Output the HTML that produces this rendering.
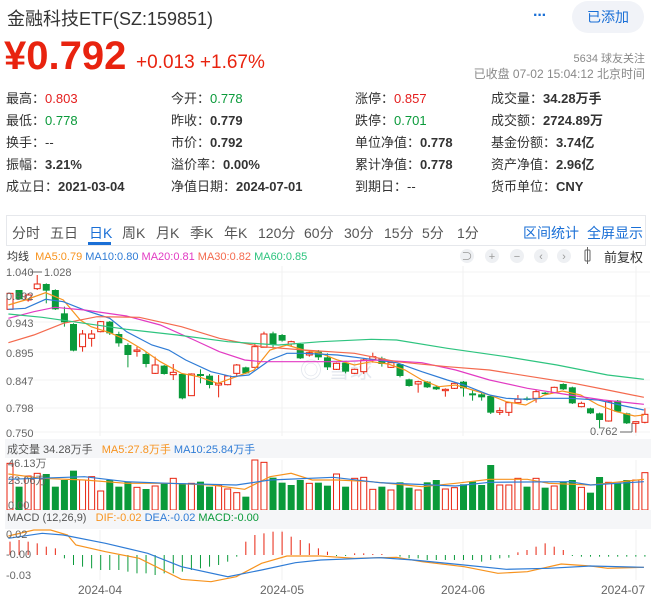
<!DOCTYPE html>
<html><head><meta charset="utf-8"><style>
*{margin:0;padding:0;box-sizing:border-box}
body{width:657px;height:598px;overflow:hidden;background:#fff;font-family:"Liberation Sans","Noto Sans CJK SC",sans-serif;color:#333;position:relative}
.a{position:absolute;white-space:nowrap}
.r{color:#e41e1e}.g{color:#0a9a3a}
.grid span{position:absolute;font-size:13px;white-space:nowrap}
.grid b{font-weight:bold}
.tab{position:absolute;top:223px;font-size:14px;color:#555}
</style></head><body>
<div class="a" style="left:7px;top:5px;font-size:18px;color:#333">金融科技ETF(SZ:159851)</div>
<div class="a" style="left:533px;top:7px;font-size:16px;font-weight:bold;color:#1a6fd6;letter-spacing:-1px">···</div>
<div class="a" style="left:572px;top:1px;width:72px;height:32px;border-radius:16px;background:#f1f3f8;color:#1a6fd6;font-size:14px;line-height:32px;text-align:center">已添加</div>
<div class="a r" style="left:4px;top:34px;font-size:40px;font-weight:bold;color:#e8230f">¥0.792</div>
<div class="a r" style="left:136px;top:52px;font-size:19px;color:#e8230f">+0.013 +1.67%</div>
<div class="a" style="right:12px;top:50px;font-size:11px;color:#888">5634 球友关注</div>
<div class="a" style="right:12px;top:65px;font-size:12px;color:#888">已收盘 07-02 15:04:12 北京时间</div>
<div class="grid">
<span style="left:6px;top:88px">最高：<b class="r" style="font-weight:normal">0.803</b></span>
<span style="left:6px;top:110px">最低：<b class="g" style="font-weight:normal">0.778</b></span>
<span style="left:6px;top:132px">换手：--</span>
<span style="left:6px;top:154px">振幅：<b>3.21%</b></span>
<span style="left:6px;top:176px">成立日：<b>2021-03-04</b></span>
<span style="left:171px;top:88px">今开：<b class="g" style="font-weight:normal">0.778</b></span>
<span style="left:171px;top:110px">昨收：<b>0.779</b></span>
<span style="left:171px;top:132px">市价：<b>0.792</b></span>
<span style="left:171px;top:154px">溢价率：<b>0.00%</b></span>
<span style="left:171px;top:176px">净值日期：<b>2024-07-01</b></span>
<span style="left:355px;top:88px">涨停：<b class="r" style="font-weight:normal">0.857</b></span>
<span style="left:355px;top:110px">跌停：<b class="g" style="font-weight:normal">0.701</b></span>
<span style="left:355px;top:132px">单位净值：<b>0.778</b></span>
<span style="left:355px;top:154px">累计净值：<b>0.778</b></span>
<span style="left:355px;top:176px">到期日：--</span>
<span style="left:491px;top:88px">成交量：<b>34.28万手</b></span>
<span style="left:491px;top:110px">成交额：<b>2724.89万</b></span>
<span style="left:491px;top:132px">基金份额：<b>3.74亿</b></span>
<span style="left:491px;top:154px">资产净值：<b>2.96亿</b></span>
<span style="left:491px;top:176px">货币单位：<b>CNY</b></span>
</div>
<div class="a" style="left:6px;top:215px;width:640px;height:31px;border:1px solid #e6e8ec"></div>
<div class="tab" style="left:12px">分时</div><div class="tab" style="left:50px">五日</div>
<div class="tab" style="left:89px;color:#1a6fd6">日K</div>
<div class="a" style="left:88px;top:242px;width:23px;height:3px;background:#1a6fd6"></div>
<div class="tab" style="left:122px">周K</div><div class="tab" style="left:156px">月K</div><div class="tab" style="left:190px">季K</div><div class="tab" style="left:224px">年K</div>
<div class="tab" style="left:258px">120分</div><div class="tab" style="left:304px">60分</div><div class="tab" style="left:344px">30分</div><div class="tab" style="left:384px">15分</div><div class="tab" style="left:422px">5分</div><div class="tab" style="left:457px">1分</div>
<div class="tab" style="left:523px;color:#1a6fd6">区间统计</div><div class="tab" style="left:587px;color:#1a6fd6">全屏显示</div>
<div class="a" style="left:7px;top:248px;font-size:11px">均线 <span style="color:#f7931e">&nbsp;MA5:0.79</span> <span style="color:#2f7cd6">MA10:0.80</span> <span style="color:#e23ac3">MA20:0.81</span> <span style="color:#f46a4e">MA30:0.82</span> <span style="color:#2ec47f">MA60:0.85</span></div>
<svg class="a" style="left:0;top:0" width="657" height="598" id="s"></svg>
<div class="a" style="left:604px;top:247px;font-size:13px">前复权</div>
<div class="a" style="left:5px;top:439px;width:646px;height:19px;background:#f5f6f8"></div>
<div class="a" style="left:5px;top:510px;width:646px;height:19px;background:#f5f6f8"></div>
<div class="a" style="left:7px;top:441px;font-size:11px;color:#555">成交量 34.28万手 &nbsp;&nbsp;<span style="color:#f7931e">MA5:27.8万手</span> <span style="color:#2f7cd6">MA10:25.84万手</span></div>
<div class="a" style="left:7px;top:512px;font-size:11px;color:#555">MACD (12,26,9) &nbsp;&nbsp;<span style="color:#f7931e">DIF:-0.02</span> <span style="color:#2f7cd6">DEA:-0.02</span> <span style="color:#0a9a3a">MACD:-0.00</span></div>
<script>
var s=document.getElementById('s'),h='';
function X(zx){return zx/2.37}
function L(x1,y1,x2,y2,c,w){h+='<line x1="'+x1+'" y1="'+y1+'" x2="'+x2+'" y2="'+y2+'" stroke="'+c+'" stroke-width="'+(w||1)+'"/>'}
function T(x,y,t,c,fs,a){h+='<text x="'+x+'" y="'+y+'" fill="'+(c||'#666')+'" font-size="'+(fs||11)+'" font-family="Liberation Sans,Noto Sans CJK SC,sans-serif"'+(a?' text-anchor="'+a+'"':'')+'>'+t+'</text>'}
function P(pts,c,base){var d=pts.map(function(p,i){return (i?'L':'M')+X(p[0]).toFixed(1)+' '+(base+p[1]/3).toFixed(1)}).join(' ');h+='<path d="'+d+'" fill="none" stroke="'+c+'" stroke-width="1.2"/>'}
[100,282,463,636].forEach(function(x){L(x,266,x,436,'#f0f0f0');L(x,460,x,510,'#f0f0f0');L(x,530,x,580,'#f0f0f0')});
[272,296,322,352,380,408,432].forEach(function(y){L(5,y,650,y,'#f3f3f3')});
T(300,378,'◎ 雪球','#e3e7ee',22);
var C=[['r',250,298,250,298],['g',240,268,240,270],['r',255,270,250,275],['r',222,236,195,240],['g',222,242,220,280],['g',240,298,238,300],['g',310,337,290,350],['g',342,422,340,424],['r',372,410,360,425],['r',372,385,360,410],['r',335,365,333,367],['g',335,370,333,375],['g',372,400,365,410],['g',405,435,400,472],['r',420,424,410,440],['g',432,462,425,472],['r',465,490,440,492],['g',467,492,465,494],['r',487,494,462,510],['g',492,565,490,568],['r',492,557,490,558],['g',492,498,478,520],['g',497,525,492,535],['r',520,525,495,562],['r',498,524,496,526],['r',465,490,462,500],['g',472,490,470,492],['r',410,472,400,472],['r',372,412,365,412],['g',370,405,365,415],['g',375,392,372,395],['r',395,402,392,410],['g',402,445,400,447],['r',428,435,420,440],['g',425,442,420,450],['g',442,472,430,480],['r',460,478,458,480],['g',458,485,455,490],['r',478,490,476,492],['r',450,485,445,492],['r',440,448,428,458],['g',445,462,440,470],['r',458,472,456,474],['g',462,498,460,502],['g',508,528,506,530],['r',515,522,512,548],['g',515,532,513,534],['g',530,538,528,540],['r',538,542,535,560],['r',520,535,518,537],['g',515,535,513,560],['g',550,556,540,572],['g',553,562,548,572],['g',558,608,556,612],['r',602,607,592,615],['r',578,607,576,618],['r',568,578,555,582],['g',565,570,560,572],['r',545,565,540,578],['g',548,552,546,554],['r',532,548,530,550],['g',522,538,520,540],['g',532,580,530,582],['r',580,590,575,592],['g',595,610,593,612],['g',610,630,608,655],['r',575,633,573,635],['g',572,605,570,607],['g',610,640,608,642],['r',635,640,635,668],['r',613,637,595,640]];
var V=[['r',100],['g',170],['r',138],['r',130],['g',132],['g',170],['g',150],['g',122],['r',150],['r',140],['r',183],['g',150],['g',170],['g',155],['r',172],['g',177],['r',168],['g',160],['r',145],['g',160],['r',160],['g',155],['g',170],['r',165],['r',177],['r',188],['g',200],['r',90],['r',97],['g',143],['g',158],['g',165],['g',150],['r',160],['g',158],['g',167],['r',132],['g',170],['r',145],['r',142],['r',178],['g',170],['r',180],['g',157],['g',173],['r',180],['g',157],['g',150],['r',177],['r',173],['g',163],['g',155],['g',165],['g',105],['r',165],['r',165],['r',145],['g',170],['r',145],['g',173],['r',168],['g',155],['g',150],['r',172],['g',188],['g',141],['r',157],['g',160],['g',150],['r',150],['r',128]];
var M=[40,45,40,35,25,20,-10,-30,-35,-40,-45,-45,-45,-50,-55,-55,-60,-55,-55,-50,-45,-40,-35,-30,-20,-5,40,60,65,70,70,55,45,35,20,10,-3,-3,5,5,3,3,0,-5,-10,-10,-15,-15,-15,-15,-15,-15,-20,-15,-10,-8,8,15,25,35,25,15,-3,-5,-5,-5,-5,-5,-5,-5,-5];
for(var i=0;i<71;i++){var x=10+i*9.07,c=C[i],col=c[0]=='r'?'#e8230f':'#0a9a3a',y1=210+c[1]/3,y2=210+c[2]/3;
L(x,210+c[3]/3,x,210+c[4]/3,col);
if(c[0]=='r')h+='<rect x="'+(x-3)+'" y="'+y1+'" width="6" height="'+Math.max(y2-y1,1)+'" fill="#fff" stroke="'+col+'"/>';
else h+='<rect x="'+(x-3.5)+'" y="'+y1+'" width="7" height="'+Math.max(y2-y1,1)+'" fill="'+col+'"/>';
var v=V[i],vc=v[0]=='r'?'#e8230f':'#0a9a3a',vy=430+v[1]/3;
if(v[0]=='r')h+='<rect x="'+(x-3)+'" y="'+vy+'" width="6" height="'+(510-vy)+'" fill="#fff" stroke="'+vc+'"/>';
else h+='<rect x="'+(x-3.5)+'" y="'+vy+'" width="7" height="'+(510-vy)+'" fill="'+vc+'"/>';
var m=M[i];L(x,555,x,555-m/3,m>0?'#e8230f':'#0a9a3a');}
P([[20,285],[60,270],[108,248],[150,270],[190,330],[216,350],[260,368],[300,390],[340,420],[380,455],[430,490],[470,500],[516,520],[560,500],[602,480],[640,420],[680,405],[720,420],[760,430],[800,450],[840,465],[880,455],[920,462],[960,480],[1000,510],[1040,530],[1080,525],[1120,540],[1160,555],[1200,575],[1246,585],[1290,555],[1333,543],[1376,555],[1418,585],[1461,605],[1504,618],[1526,615]],'#f7931e',210);
P([[20,298],[60,295],[108,268],[150,275],[200,300],[260,325],[300,365],[360,405],[400,420],[440,450],[500,485],[550,500],[590,495],[640,450],[680,430],[720,430],[800,435],[880,448],[940,458],[1000,485],[1060,510],[1100,525],[1160,555],[1200,565],[1246,568],[1290,565],[1350,565],[1418,570],[1480,588],[1526,600]],'#2f7cd6',210);
P([[20,325],[80,305],[130,292],[200,300],[300,318],[380,345],[460,390],[520,425],[580,450],[620,455],[700,455],[800,455],[900,450],[1000,458],[1080,480],[1160,510],[1250,535],[1350,555],[1430,570],[1526,583]],'#e23ac3',210);
P([[20,398],[80,375],[150,340],[230,320],[330,322],[430,350],[520,385],[620,410],[720,420],[840,430],[940,455],[1060,470],[1160,480],[1260,500],[1360,520],[1440,540],[1526,562]],'#f46a4e',210);
P([[20,312],[100,322],[200,340],[300,358],[420,375],[540,395],[660,405],[760,395],[880,388],[940,390],[1060,415],[1200,440],[1320,465],[1440,495],[1526,508]],'#2ec47f',210);
P([[20,132],[100,145],[200,150],[300,160],[400,160],[500,165],[580,178],[640,140],[690,130],[740,150],[800,150],[880,155],[960,165],[1000,170],[1080,160],[1160,148],[1250,148],[1300,160],[1400,165],[1526,148]],'#f7931e',430);
P([[20,148],[200,140],[300,155],[400,160],[560,165],[640,150],[790,142],[900,158],[1080,168],[1160,157],[1350,155],[1400,165],[1526,155]],'#2f7cd6',430);
P([[20,318],[80,300],[120,300],[160,315],[180,345],[250,365],[330,385],[430,448],[500,455],[560,440],[620,400],[680,378],[760,378],[840,385],[940,382],[1000,395],[1100,410],[1180,430],[1250,425],[1330,402],[1400,408],[1440,415],[1526,412]],'#f7931e',430);
P([[20,325],[100,310],[150,315],[250,340],[350,370],[430,410],[540,440],[620,420],[700,398],[760,390],[900,383],[980,390],[1100,405],[1200,418],[1300,415],[1400,408],[1526,412]],'#2f7cd6',430);
T(6,276,'1.040');L(30,272,42,272,'#666');T(44,276,'1.028');
T(6,300,'0.992');T(6,327,'0.943');T(6,357,'0.895');T(6,385,'0.847');T(6,412,'0.798');T(6,437,'0.750');
T(590,435,'0.762');L(620,432,632,432,'#666');L(632,432,632,423,'#666');
T(8,467,'46.13万');T(8,484,'23.06万');T(8,509,'0.00');
T(6,538,'0.02');T(6,558,'-0.00');T(6,579,'-0.03');
T(100,594,'2024-04','#666',12,'middle');T(282,594,'2024-05','#666',12,'middle');T(463,594,'2024-06','#666',12,'middle');T(645,594,'2024-07','#666',12,'end');
[467,492,517,541,564].forEach(function(x,i){h+='<circle cx="'+x+'" cy="256" r="7" fill="#eef0f3"/>';T(x,260,['⊃','+','−','‹','›'][i],'#999',11,'middle')});
h+='<rect x="585" y="250" width="5" height="11" rx="1" fill="none" stroke="#666"/>';L(587.5,247,587.5,264,'#666');
h+='<circle cx="640" cy="448" r="7" fill="#eceef1"/>';T(640,452,'×','#888',10,'middle');
h+='<circle cx="640" cy="519" r="7" fill="#eceef1"/>';T(640,523,'×','#888',10,'middle');
s.innerHTML=h;
</script>
</body></html>
